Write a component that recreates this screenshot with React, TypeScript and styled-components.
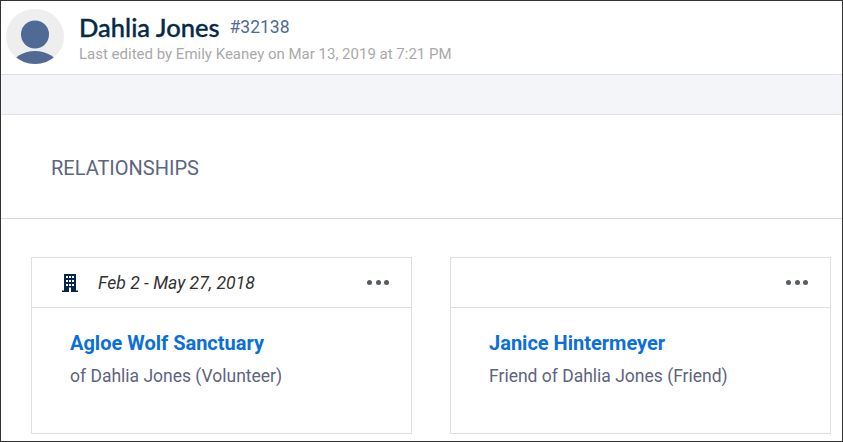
import React from "react";
import styled, { createGlobalStyle } from "styled-components";

const Global = createGlobalStyle`
  html, body { margin: 0; padding: 0; background: #fff; }
  * { box-sizing: border-box; }
`;

const Frame = styled.div`
  width: 843px;
  height: 442px;
  border: 1px solid #333;
  overflow: hidden;
  font-family: Roboto, "Liberation Sans", sans-serif;
  background: #fff;
  display: flex;
  flex-direction: column;
`;

const Header = styled.header`
  height: 74px;
  display: flex;
  align-items: flex-start;
  padding: 8px 0 0 5px;
  border-bottom: 1px solid #dcdcea;
`;

const Avatar = styled.svg`
  width: 58px;
  height: 56px;
  flex: none;
`;

const Titles = styled.div`
  margin-left: 15px;
  display: flex;
  flex-direction: column;
`;

const NameRow = styled.div`
  display: flex;
  align-items: flex-start;
  height: 30px;
  margin-top: 3px;
`;

const Name = styled.h1`
  margin: 0;
  font-family: Lato, sans-serif;
  font-weight: 500;
  font-size: 25.5px;
  line-height: 30px;
  color: #04294a;
  -webkit-text-stroke: 0.35px #04294a;
`;

const RecordId = styled.span`
  margin-left: 10px;
  font-size: 17.5px;
  line-height: 30px;
  color: #4f6a94;
`;

const Edited = styled.div`
  margin-top: 3px;
  font-size: 15px;
  line-height: 18px;
  color: #a9a9a9;
`;

const Band = styled.div`
  height: 40px;
  background: #f4f5f9;
  border-bottom: 1px solid #e2e2e6;
`;

const SectionHead = styled.div`
  height: 104px;
  display: flex;
  align-items: center;
  padding: 2px 0 0 50px;
  border-bottom: 1px solid #d9d9d9;
`;

const SectionTitle = styled.h2`
  margin: 0;
  font-weight: 400;
  font-size: 20px;
  color: #5b6680;
`;

const Cards = styled.div`
  display: flex;
  gap: 38px;
  padding: 38px 0 0 30px;
`;

const Card = styled.article`
  width: 381px;
  height: 177px;
  border: 1px solid #dfdfdf;
  display: flex;
  flex-direction: column;
`;

const CardTop = styled.div`
  height: 50px;
  flex: none;
  display: flex;
  align-items: center;
  padding: 0 22px 0 30px;
  border-bottom: 1px solid #dfdfdf;
`;

const BuildingIcon = styled.svg`
  width: 16px;
  height: 18px;
  flex: none;
`;

const DateText = styled.span`
  margin-left: 20px;
  font-style: italic;
  font-size: 17.6px;
  color: #333;
`;

const More = styled.div`
  margin-left: auto;
  display: flex;
  gap: 3.3px;
`;

const Dot = styled.span`
  width: 5px;
  height: 5px;
  border-radius: 50%;
  background: #565b66;
`;

const CardBody = styled.div<{ $pad: number }>`
  padding: 24px 0 0 ${(p) => p.$pad}px;
`;

const CardLink = styled.a`
  display: block;
  font-weight: 700;
  font-size: 20px;
  line-height: 22px;
  color: #0b6fdb;
  text-decoration: none;
`;

const CardSub = styled.div`
  margin-top: 12px;
  font-size: 17.5px;
  line-height: 20px;
  color: #5e6480;
`;

const Dots = () => (
  <More>
    <Dot />
    <Dot />
    <Dot />
  </More>
);

export default function App() {
  return (
    <>
      <Global />
      <Frame>
        <Header>
          <Avatar viewBox="0 0 58 56">
            <defs>
              <clipPath id="c">
                <ellipse cx="29" cy="27.5" rx="29" ry="27.5" />
              </clipPath>
            </defs>
            <ellipse cx="29" cy="27.5" rx="29" ry="27.5" fill="#eeeeee" />
            <g clipPath="url(#c)">
              <circle cx="29" cy="25.5" r="14" fill="#4f6a94" />
              <ellipse cx="29" cy="57" rx="23" ry="15" fill="#4f6a94" />
            </g>
          </Avatar>
          <Titles>
            <NameRow>
              <Name>Dahlia Jones</Name>
              <RecordId>#32138</RecordId>
            </NameRow>
            <Edited>Last edited by Emily Keaney on Mar 13, 2019 at 7:21 PM</Edited>
          </Titles>
        </Header>
        <Band />
        <SectionHead>
          <SectionTitle>RELATIONSHIPS</SectionTitle>
        </SectionHead>
        <Cards>
          <Card>
            <CardTop>
              <BuildingIcon viewBox="0 0 16 18">
                <path
                  fillRule="evenodd"
                  fill="#03264d"
                  d="M2 0h12v16.5h2V18H0v-1.5h2zM4 2v2h2V2zM7 2v2h2V2zM10 2v2h2V2zM4 6v2h2V6zM7 6v2h2V6zM10 6v2h2V6zM4 10v2h2v-2zM7 10v2h2v-2zM10 10v2h2v-2zM7 13.5V18h2v-4.5z"
                />
              </BuildingIcon>
              <DateText>Feb 2 - May 27, 2018</DateText>
              <Dots />
            </CardTop>
            <CardBody $pad={38}>
              <CardLink>Agloe Wolf Sanctuary</CardLink>
              <CardSub>of Dahlia Jones (Volunteer)</CardSub>
            </CardBody>
          </Card>
          <Card>
            <CardTop>
              <Dots />
            </CardTop>
            <CardBody $pad={38}>
              <CardLink>Janice Hintermeyer</CardLink>
              <CardSub>Friend of Dahlia Jones (Friend)</CardSub>
            </CardBody>
          </Card>
        </Cards>
      </Frame>
    </>
  );
}
